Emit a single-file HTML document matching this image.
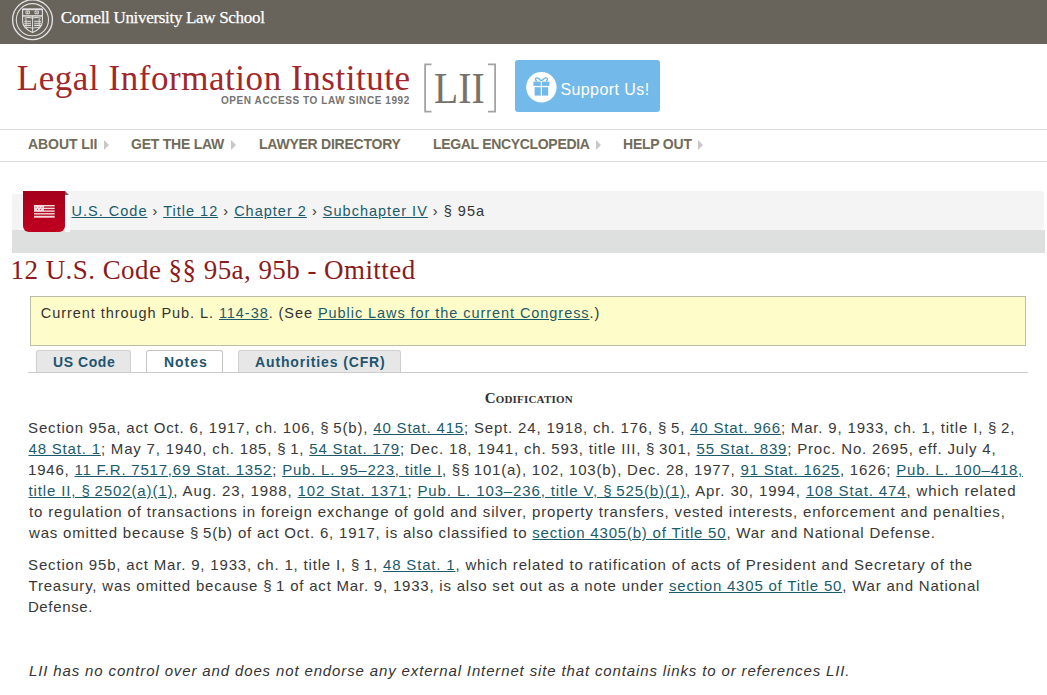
<!DOCTYPE html>
<html><head><meta charset="utf-8">
<style>
*{margin:0;padding:0;box-sizing:border-box}
html,body{width:1047px;height:695px;overflow:hidden;background:#fff;font-family:"Liberation Sans",sans-serif;color:#333}
.abs{position:absolute;white-space:nowrap}
#topbar{position:absolute;left:0;top:0;width:1047px;height:44px;background:#68635b}
#cornell{left:61px;top:7px;font-family:"Liberation Serif",serif;font-size:17px;color:#fff;-webkit-text-stroke:0.25px #fff;line-height:22px}
#lii{left:17px;top:59px;font-family:"Liberation Serif",serif;font-size:35px;color:#a0282b;line-height:40px}
#open{left:221px;top:95px;font-size:10px;font-weight:bold;color:#737373;line-height:12px;letter-spacing:0.5px}
#liit{left:434px;top:67px;font-family:"Liberation Serif",serif;font-size:44px;line-height:44px;color:#77726a;transform:scaleX(0.9);transform-origin:0 0}
#support{position:absolute;left:515px;top:60px;width:145px;height:51.5px;background:#73b9e9;border-radius:3px}
#supt{left:561px;top:80px;font-size:16px;color:#fff;line-height:20px}
#navl1{position:absolute;left:0;top:129px;width:1047px;height:1px;background:#dcdcdc}
#navl2{position:absolute;left:0;top:161px;width:1047px;height:1px;background:#dcdcdc}
.nav{top:137px;font-size:14px;font-weight:bold;color:#716b5a;line-height:14px}
.arr{position:absolute;top:140px;width:0;height:0;border-left:5px solid #c8c8c8;border-top:5px solid transparent;border-bottom:5px solid transparent}
#bc1{position:absolute;left:12px;top:191px;width:1032px;height:38.5px;background:#f4f4f4;border-radius:0 3px 3px 0}
#bc0{position:absolute;left:12px;top:191px;width:11px;height:3px;background:#fff}
#bc2{position:absolute;left:12px;top:229.5px;width:1033px;height:23.5px;background:#dde0df}
#badge{position:absolute;left:23px;top:191px;width:42px;height:41px;background:linear-gradient(#a5001c,#c0001f);border-radius:0 0 6px 6px}
#bct{left:71px;top:202px;font-size:14.5px;line-height:18px;color:#333}
a{color:#1b5b6c;text-decoration:underline}
#title{left:12px;top:255px;font-family:"Liberation Serif",serif;font-size:27px;color:#8b1b1b;line-height:30px}
#yel{position:absolute;left:30px;top:296px;width:996px;height:50px;background:#fefcc9;border:1px solid #bcbcaa}
#yelt{left:40px;top:304px;font-size:14.5px;line-height:18px}
.tab{position:absolute;top:350px;height:23px;background:#e7e7e7;border:1px solid #d0d0d0;border-bottom:none;border-radius:3px 3px 0 0}
.tabt{top:354px;font-size:14px;font-weight:bold;color:#1f5570;line-height:16px}
#tabline{position:absolute;left:28px;top:372px;width:1000px;height:1px;background:#ccc}
#cod{left:485px;top:390px;font-family:"Liberation Serif",serif;font-weight:bold;font-size:15px;color:#333;font-variant:small-caps;line-height:16px}
.p{left:28px;font-size:15px;line-height:21px;color:#383838}
#foot{left:28px;top:660px;font-size:15px;font-style:italic;line-height:21px;color:#333}
</style><style id="fit">
#cornell{letter-spacing:-0.313px;left:60.7px}
#lii{letter-spacing:0.546px;left:16.8px}
#open{letter-spacing:0.571px;left:221.0px}
#supt{letter-spacing:0.42px;left:560.4px}
#nav0{letter-spacing:-0.072px;left:28.6px}
#nav1{letter-spacing:-0.24px;left:131.0px}
#nav2{letter-spacing:-0.24px;left:258.0px}
#nav3{letter-spacing:-0.32px;left:432.2px}
#nav4{letter-spacing:-0.227px;left:621.8px}
#bct{letter-spacing:1.008px;left:71.5px}
#title{letter-spacing:0.443px;left:10.6px}
#yelt{letter-spacing:0.94px;left:40.8px}
#tab0{letter-spacing:0.567px;left:51.6px}
#tab1{letter-spacing:0.95px;left:163.0px}
#tab2{letter-spacing:0.863px;left:255.0px}
#cod{letter-spacing:0.192px;left:484.7px}
#p1l0{letter-spacing:0.822px;left:28.1px}
#p1l1{letter-spacing:0.815px;left:28.5px}
#p1l2{letter-spacing:0.783px;left:28.1px}
#p1l3{letter-spacing:0.877px;left:28.5px}
#p1l4{letter-spacing:0.835px;left:29.1px}
#p1l5{letter-spacing:0.797px;left:29.1px}
#p2l0{letter-spacing:0.819px;left:28.1px}
#p2l1{letter-spacing:0.791px;left:28.5px}
#p2l2{letter-spacing:0.643px;left:27.9px}
#foot{letter-spacing:0.864px;left:29.0px}
</style>
</head><body>
<div id="topbar"></div>
<svg class="abs" style="left:0;top:0" width="60" height="44" viewBox="0 0 60 44">
<g fill="none" stroke="#e0e0e0">
<circle cx="32.5" cy="19.7" r="19.9" stroke-width="1.4"/>
<circle cx="32.4" cy="19.7" r="16.1" stroke-width="1.1"/>
<path d="M22.6,9.2 H42.4 V21.5 Q42.4,28 32.6,32.6 Q22.6,28 22.6,21.5 Z" stroke-width="1.1"/>
<path d="M22.6,9.3 H42.4" stroke-width="1.8"/>
<path d="M22.6,15.9 H42.4" stroke-width="1.5"/>
<path d="M32.6,15.9 V32.6" stroke-width="1"/>
<path d="M26,11 H29.4 V13.8 H26 Z M27.7,11 V13.8" stroke-width="0.9"/>
<path d="M35,11 H38.4 V13.8 H35 Z M35.6,11.4 L37.8,13.4" stroke-width="0.9"/>
<path d="M24.5,18.3 Q28.5,16.8 32.6,18.2 Q36.5,16.8 40.8,18.3" stroke-width="1.1"/>
<path d="M24.3,21.3 H31 M24.3,23.3 H31 M24.3,25.4 H31 M34.2,21.3 H41 M34.2,23.3 H41 M34.2,25.4 H41" stroke-width="1.1"/>
<path d="M26,19 V27.5 Q29,27 32.6,28.2 Q36.2,27 39.2,27.5 V19" stroke-width="0.9"/>
</g></svg>
<div id="cornell" class="abs">Cornell University Law School</div>

<div id="lii" class="abs">Legal Information Institute</div>
<div id="open" class="abs">OPEN ACCESS TO LAW SINCE 1992</div>
<svg class="abs" style="left:420px;top:60px" width="82" height="56" viewBox="420 60 82 56">
<path d="M431.5,64.3 H425.1 V111.6 H431.5 M488,64.3 H495.1 V111.6 H488" fill="none" stroke="#a3a3a3" stroke-width="1.8"/>
</svg>
<div id="liit" class="abs">LII</div>
<div id="support"></div>
<svg class="abs" style="left:515px;top:60px" width="50" height="51" viewBox="515 60 50 51">
<circle cx="541.4" cy="87.2" r="15.2" fill="#fff"/>
<g fill="#72b8e8">
<rect x="533.4" y="81.6" width="7.4" height="4.3"/>
<rect x="542.0" y="81.6" width="7.4" height="4.3"/>
<rect x="534.6" y="87.2" width="6.2" height="8.4"/>
<rect x="542.0" y="87.2" width="6.2" height="8.4"/>
</g>
<path d="M541.3,81 Q537.5,76.5 535.5,78.5 Q535,80.5 537,81 M541.5,81 Q545.5,76.5 547.5,78.5 Q548,80.5 546,81" fill="none" stroke="#72b8e8" stroke-width="1.3"/>
</svg>
<div id="supt" class="abs">Support Us!</div>

<div id="navl1"></div><div id="navl2"></div>
<div id="nav0" class="abs nav" style="left:28px">ABOUT LII</div><div class="arr" style="left:104px"></div>
<div id="nav1" class="abs nav" style="left:131px">GET THE LAW</div><div class="arr" style="left:231px"></div>
<div id="nav2" class="abs nav" style="left:259px">LAWYER DIRECTORY</div>
<div id="nav3" class="abs nav" style="left:433px">LEGAL ENCYCLOPEDIA</div><div class="arr" style="left:596px"></div>
<div id="nav4" class="abs nav" style="left:623px">HELP OUT</div><div class="arr" style="left:698px"></div>

<div id="bc2"></div><div id="bc1"></div><div id="bc0"></div>
<div style="position:absolute;left:65px;top:195px;width:5px;height:37px;background:#fafafa"></div>
<div id="badge"></div>
<svg class="abs" style="left:20px;top:188px" width="52" height="48" viewBox="20 188 52 48">
<path d="M65,191 L69,195 L65,195 Z" fill="#666"/>
<g fill="#f6dadd">
<rect x="34" y="205" width="10" height="6.2"/>
<rect x="34" y="205" width="20.7" height="1.4"/>
<rect x="34" y="207.7" width="20.7" height="1.4"/>
<rect x="34" y="210.4" width="20.7" height="1.4"/>
<rect x="34" y="213.1" width="20.7" height="1.4"/>
<rect x="34" y="215.8" width="20.7" height="1.9"/>
</g>
<g fill="#c0505e"><circle cx="36" cy="207.2" r="0.55"/><circle cx="39" cy="207.2" r="0.55"/><circle cx="42" cy="207.2" r="0.55"/><circle cx="37.5" cy="209.4" r="0.55"/><circle cx="40.5" cy="209.4" r="0.55"/></g>
</svg>
<div id="bct" class="abs"><a>U.S. Code</a> › <a>Title 12</a> › <a>Chapter 2</a> › <a>Subchapter IV</a> › § 95a</div>

<div id="title" class="abs">12 U.S. Code §§ 95a, 95b - Omitted</div>
<div id="yel"></div>
<div id="yelt" class="abs">Current through Pub. L. <a>114-38</a>. (See <a>Public Laws for the current Congress</a>.)</div>

<div class="tab" style="left:36px;width:95px"></div>
<div class="tab" style="left:146px;top:349.5px;height:23.5px;width:77px;background:#fff;border-color:#c4c4c4"></div>
<div class="tab" style="left:238px;width:163px"></div>
<div id="tabline"></div>
<div id="tab0" class="abs tabt" style="left:53px">US Code</div>
<div id="tab1" class="abs tabt" style="left:164px">Notes</div>
<div id="tab2" class="abs tabt" style="left:255px">Authorities (CFR)</div>

<div id="cod" class="abs">Codification</div>

<div id="p1l0" class="abs p" style="top:417px">Section 95a, act Oct. 6, 1917, ch. 106, §&#8201;5(b), <a>40 Stat. 415</a>; Sept. 24, 1918, ch. 176, §&#8201;5, <a>40 Stat. 966</a>; Mar. 9, 1933, ch. 1, title I, §&#8201;2,</div>
<div id="p1l1" class="abs p" style="top:438px"><a>48 Stat. 1</a>; May 7, 1940, ch. 185, §&#8201;1, <a>54 Stat. 179</a>; Dec. 18, 1941, ch. 593, title III, §&#8201;301, <a>55 Stat. 839</a>; Proc. No. 2695, eff. July 4,</div>
<div id="p1l2" class="abs p" style="top:459px">1946, <a>11 F.R. 7517,69 Stat. 1352</a>; <a>Pub. L. 95–223, title I</a>, §§&#8201;101(a), 102, 103(b), Dec. 28, 1977, <a>91 Stat. 1625</a>, 1626; <a>Pub. L. 100–418,</a></div>
<div id="p1l3" class="abs p" style="top:480px"><a>title II, §&#8201;2502(a)(1)</a>, Aug. 23, 1988, <a>102 Stat. 1371</a>; <a>Pub. L. 103–236, title V, §&#8201;525(b)(1)</a>, Apr. 30, 1994, <a>108 Stat. 474</a>, which related</div>
<div id="p1l4" class="abs p" style="top:501px">to regulation of transactions in foreign exchange of gold and silver, property transfers, vested interests, enforcement and penalties,</div>
<div id="p1l5" class="abs p" style="top:522px">was omitted because §&#8201;5(b) of act Oct. 6, 1917, is also classified to <a>section 4305(b) of Title 50</a>, War and National Defense.</div>
<div id="p2l0" class="abs p" style="top:554px">Section 95b, act Mar. 9, 1933, ch. 1, title I, §&#8201;1, <a>48 Stat. 1</a>, which related to ratification of acts of President and Secretary of the</div>
<div id="p2l1" class="abs p" style="top:575px">Treasury, was omitted because §&#8201;1 of act Mar. 9, 1933, is also set out as a note under <a>section 4305 of Title 50</a>, War and National</div>
<div id="p2l2" class="abs p" style="top:596px">Defense.</div>

<div id="foot" class="abs">LII has no control over and does not endorse any external Internet site that contains links to or references LII.</div>
</body></html>
